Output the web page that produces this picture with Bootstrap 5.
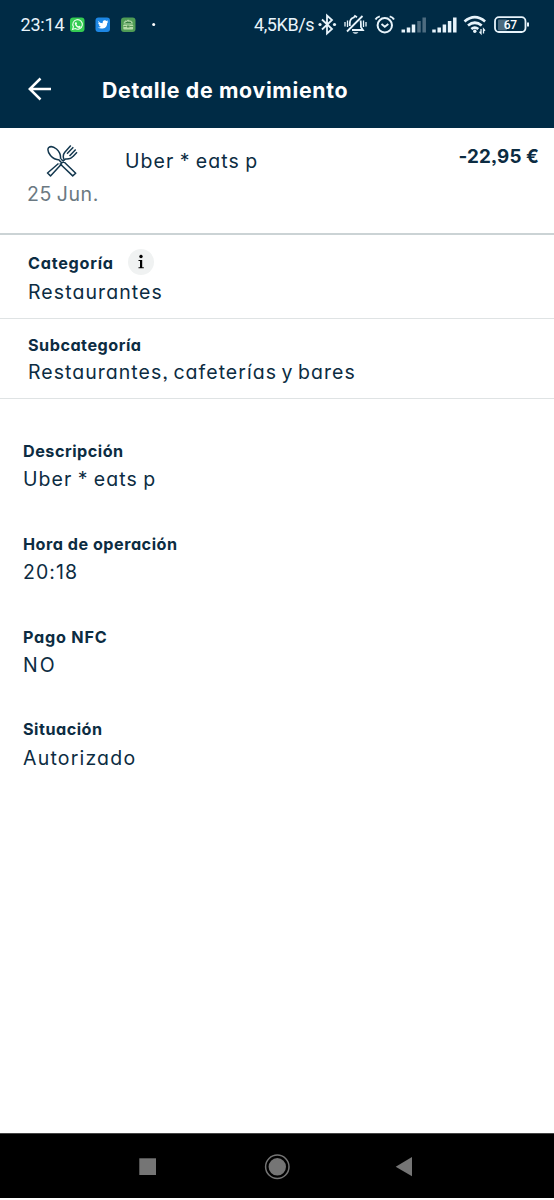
<!DOCTYPE html>
<html lang="es">
<head>
<meta charset="utf-8">
<meta name="viewport" content="width=device-width, initial-scale=1">
<title>Detalle de movimiento</title>
<link href="https://cdn.jsdelivr.net/npm/bootstrap@5.3.0/dist/css/bootstrap.min.css" rel="stylesheet">
<style>
body{font-family:Inter,"Liberation Sans",sans-serif;font-feature-settings:"cv11","ss03";color:#0c2c42;background:#fff}
svg{display:block;flex:none}
.screen{height:1200px;overflow:hidden}
.head{background:#002b45;color:#fff}
.status{height:50px;padding-left:20.5px;font:400 18px/50px Roboto,sans-serif;letter-spacing:-.2px;color:#e8f4fb}
.appbar{height:78px;padding-left:28px}
.title{font-size:21.3px;line-height:28px;font-weight:700;letter-spacing:.68px;margin:1px 0 0 50px}
.summary{height:107px;border-bottom:2px solid #cbd3d5}
.daycol{width:125px;padding:16px 0 0 27px}
.daycol svg{margin-left:19px}
.val{font-size:19.5px;line-height:28px;letter-spacing:1.08px;word-spacing:-1.3px;white-space:nowrap}
.day{color:#6b7982;letter-spacing:.6px;margin:1px 0 0}
.lbl{font-size:16.2px;line-height:24px;font-weight:700;letter-spacing:.5px;white-space:nowrap}
.amount{font-size:18.8px;line-height:28px;font-weight:700;letter-spacing:.1px;padding:15px 15px 0 0}
.payee{padding-top:19px}
.cat{height:84px;padding:16px 0 0 28px;border-bottom:1px solid #dfe3e4}
.catrow{height:27px}
.cat .lbl{letter-spacing:.75px}
.sub{height:80px;padding:14px 0 0 28px;border-bottom:1px solid #dfe3e4}
.sub .val{margin-top:1px;letter-spacing:1.03px;word-spacing:-2px}
.info{width:26px;height:26px;margin:-2px 0 0 14px;background:#f0f2f2;color:#111}
.fields{padding:40px 0 0 23px;gap:38.4px}
.fields .val{margin-top:2.4px}
.wide .val{letter-spacing:1.2px}
.wider .lbl{letter-spacing:.75px}
.wider .val{letter-spacing:2px}
.navkeys{height:65px;background:#000;border-top:1px solid #444;margin-bottom:2px}
</style>
</head>
<body>
<div class="screen d-flex flex-column">
<header class="head">
  <div class="status d-flex">
    <span style="width:49.5px">23:14</span>
    <svg width="110" height="50" viewBox="70 0 110 50">
      <rect x="70" y="17.500" width="14.500" height="14.500" rx="3" fill="#34cc52"/>
      <path d="M72.500 29.500l.9-2.700a4.800 4.800 0 1 1 1.800 1.800z" fill="none" stroke="#effff0" stroke-width="1.100"/>
      <path d="M75.300 22.200l1.200.1.500 1.500-.5.600q.7 1.300 2 1.900l.8-.6 1.400.8q-.2 1.500-1.700 1.400-3.500-.7-4.200-4.200-.1-1 .5-1.500z" fill="#effff0"/>
      <rect x="95.500" y="17.500" width="14.500" height="14.500" rx="3" fill="#1d87e4"/>
      <path d="M98 21q2 2.300 4.600 2.300-.1-2.900 2.200-3 1.100 0 1.700.7l1.600-.5-.8 1.300 1-.1-1.100 1.200q.1 4.700-4.500 5.600-2.700.4-5-.9 2 .1 3.200-.9-1.600-.2-2-1.500l1-.1q-1.700-.7-1.700-2.200l.9.200q-1.300-1-1.100-2.100z" fill="#fff"/>
      <rect x="121" y="17.500" width="14.500" height="14.500" rx="3" fill="#4f9c55"/>
      <path d="M123.500 23.500a4.700 3.700 0 0 1 9.400 0z" fill="#a9d2a1"/><path d="M125.500 22.500h5.500M126.500 20.500l1 1M130 20.500l-1 1" stroke="#397f42"/>
      <rect x="123.300" y="24.500" width="9.800" height="5" rx=".8" fill="#b7dca9"/><path d="M123.500 26.500h3m3 0h3.500" stroke="#5a9a57"/><rect x="127" y="25.500" width="2.500" height="2" fill="#4f8e50"/>
      <circle cx="153.700" cy="24.500" r="1.500" fill="#fff"/>
    </svg>
    <span style="width:63px;margin-left:74px;letter-spacing:-.4px">4,5KB/s</span>
    <svg width="237" height="50" viewBox="317 0 237 50" fill="none" stroke="#e8f4fb" stroke-width="1.800">
      <path d="M322 19.500l10 9.500-5 4.500v-18l5 4.500-10 9.500"/>
      <circle cx="320" cy="24.500" r="1.600" fill="#e8f4fb" stroke="none"/><circle cx="334.500" cy="24.500" r="1.600" fill="#e8f4fb" stroke="none"/>
      <path d="M347 31.500L362.500 16M349.800 26v-2.500q0-5 4-6l1.200-1.500 2 1.200M360.500 20.500q.4 1 .4 3.500v3l2 3H352"/>
      <path d="M352.500 32.200h6q-3 3-6 0z" fill="#e8f4fb" stroke="none"/>
      <path d="M345 22v4.500M347.500 20.500v6.500M363.500 20.500v6.500M366 22v4.500" stroke-width="1.300"/>
      <circle cx="384.800" cy="25.300" r="7.200" stroke-width="2"/><path d="M381.500 24l3.300 2.700 3.500-2.700M375.500 19.500q1-2.200 4.300-3.200M394 19.500q-1-2.200-4.300-3.200" stroke-width="1.900"/>
      <g stroke-width="3.500">
      <path d="M403.300 32.500v-3M408.500 32.500v-5M413.500 32.500v-8"/><path d="M419 32.500v-11.500M424.200 32.500v-15" stroke="#4d6c80"/>
      <path d="M434 32.500v-3M439.200 32.500v-5M444.400 32.500v-8M449.600 32.500v-11.500M454.800 32.500v-15"/></g>
      <path d="M464.500 21.500q10.300-8.600 20.600 0M468 25.500q6.800-5.500 13.700 0M471.300 29q3.500-2.800 7 0" stroke-width="2.700"/>
      <circle cx="474.800" cy="31.300" r="1.700" fill="#e8f4fb" stroke="none"/>
      <path d="M481 29v4.500l-1.500-1.700M483.500 33.500V29l1.500 1.700" stroke-width="1.300"/>
      <rect x="498" y="19.500" width="9" height="11" rx="1" fill="#4d6a7e" stroke="none"/>
      <rect x="495" y="17.200" width="30.500" height="14.800" rx="4"/>
      <path d="M528 22.500v4" stroke-width="2"/>
      <text x="510.300" y="29.200" text-anchor="middle" font-family="Roboto" font-weight="500" font-size="12" fill="#fff" stroke="none">67</text>
    </svg>
  </div>
  <div class="appbar d-flex align-items-center">
    <svg width="24" height="24" viewBox="28 77 24 24" fill="none" stroke="#fff" stroke-width="2.500"><path d="M51 89H29.500M40.500 78.500L29.800 89l10.700 10.500"/></svg>
    <div class="title">Detalle de movimiento</div>
  </div>
</header>
<section class="summary d-flex">
  <div class="daycol">
    <svg width="32" height="35" viewBox="46 144 32 35" fill="none" stroke="#14384f" stroke-width="1.500" stroke-linejoin="round">
      <path d="M59.500 160q-5.500-.3-9-4.500-4-5.200-1.800-8 3-2.300 7.800 1.500 4.600 4 4 9.800M58.500 163.500L47.500 173l3 2.900L62 163.500M61 159l14.700 14.300-3 2.600L59.700 163.500M59 160l3.300 3.500M61.500 162.500l4-3.500q5 .6 7.500-2.600l4-4.200M64 159.500q-1.800-4.300.8-7.300l6-6.700M67 153.800l6.300-6.600M69.500 156l6.200-6.400"/>
    </svg>
    <div class="val day">25 Jun.</div>
  </div>
  <div class="val payee">Uber * eats p</div>
  <div class="amount ms-auto">-22,95 €</div>
</section>
<section class="cat">
  <div class="catrow d-flex"><div class="lbl">Categoría</div>
    <div class="info rounded-circle d-flex align-items-center justify-content-center"><svg width="10" height="18" viewBox="0 0 10 18"><circle cx="5" cy="3.500" r="1.700"/><path d="M2.500 7h3.700v7.200h1.600v1H2.500v-1H4V8H2.500z"/></svg></div>
  </div>
  <div class="val">Restaurantes</div>
</section>
<section class="sub">
  <div class="lbl">Subcategoría</div>
  <div class="val">Restaurantes, cafeterías y bares</div>
</section>
<main class="fields d-flex flex-column flex-grow-1">
  <div><div class="lbl">Descripción</div><div class="val">Uber * eats p</div></div>
  <div><div class="lbl">Hora de operación</div><div class="val">20:18</div></div>
  <div class="wider"><div class="lbl">Pago NFC</div><div class="val">NO</div></div>
  <div class="wide"><div class="lbl">Situación</div><div class="val">Autorizado</div></div>
</main>
<nav class="navkeys flex-shrink-0">
  <svg width="554" height="64" viewBox="0 1134 554 64" fill="#757575"><rect x="139.300" y="1158.300" width="16.700" height="16.700"/><circle cx="277.300" cy="1166.800" r="8.700"/><circle cx="277.300" cy="1166.800" r="11.700" fill="none" stroke="#757575" stroke-width="1.500"/><path d="M395.700 1166.800l16.300-9.800v19.300z"/></svg>
</nav>
</div>
<script src="https://cdn.jsdelivr.net/npm/bootstrap@5.3.0/dist/js/bootstrap.bundle.min.js"></script>
</body>
</html>
